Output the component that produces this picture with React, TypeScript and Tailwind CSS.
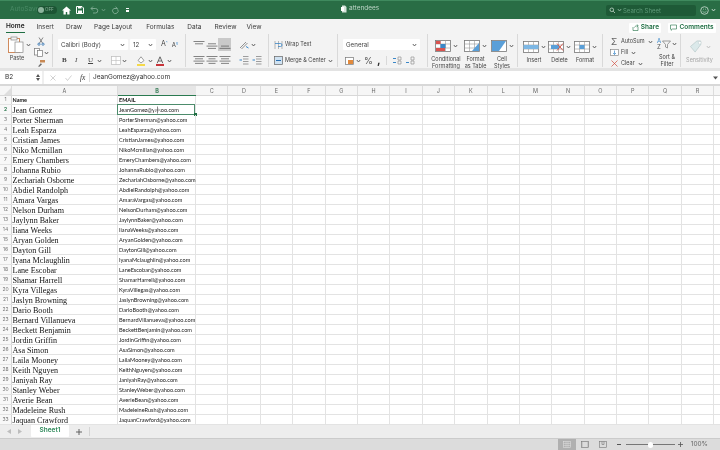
import React from "react";

const names = ["Jean Gomez","Porter Sherman","Leah Esparza","Cristian James","Niko Mcmillan","Emery Chambers","Johanna Rubio","Zechariah Osborne","Abdiel Randolph","Amara Vargas","Nelson Durham","Jaylynn Baker","Iiana Weeks","Aryan Golden","Dayton Gill","Iyana Mclaughlin","Lane Escobar","Shamar Harrell","Kyra Villegas","Jaslyn Browning","Dario Booth","Bernard Villanueva","Beckett Benjamin","Jordin Griffin","Asa Simon","Laila Mooney","Keith Nguyen","Janiyah Ray","Stanley Weber","Averie Bean","Madeleine Rush","Jaquan Crawford"];
const extra = ["C","D","E","F","G","H","I","J","K","L","M","N","O","P","Q","R"];
const sans = "font-['Inter','Liberation_Sans',sans-serif]";
const lato = "font-['Lato','Liberation_Sans',sans-serif]";

function Chev({ c = "#555" }: { c?: string }) {
  return <svg width="5" height="4" viewBox="0 0 5 4" className="shrink-0"><path d="M.8 1 2.5 3 4.2 1" fill="none" stroke={c} strokeWidth=".9" /></svg>;
}
function Sep() {
  return <div className="w-px h-[33px] bg-[#d9d9d9] shrink-0" />;
}
function Lines({ w }: { w: number[] }) {
  return (
    <svg width="12" height="10" viewBox="0 0 12 10">
      {w.map((x, i) => <path key={i} d={`M${(12 - x) / 2} ${1.5 + i * 2.3}h${x}`} stroke="#666" strokeWidth=".8" />)}
    </svg>
  );
}
function GridIcon({ children }: { children?: React.ReactNode }) {
  return (
    <svg width="16" height="12" viewBox="0 0 16 12">
      <rect x=".5" y=".5" width="15" height="11" fill="#fff" stroke="#777" strokeWidth=".8" />
      <path d="M5.5 .5v11M10.5 .5v11M.5 4h15M.5 8h15" stroke="#999" strokeWidth=".6" />
      {children}
    </svg>
  );
}
function Big({ w, label, icon, gray }: { w: number; label: React.ReactNode; icon: React.ReactNode; gray?: boolean }) {
  return (
    <div className="flex flex-col items-center shrink-0 h-full pt-[7px]" style={{ width: w }}>
      <div className="h-[13px] flex items-center gap-[2px]">{icon}<Chev c={gray ? "#bbb" : "#555"} /></div>
      <div className={`mt-[3.500px] text-center text-[5.5px] leading-[7px] whitespace-nowrap ${gray ? "text-[#a5a5a5]" : "text-[#444]"}`}>{label}</div>
    </div>
  );
}

function TitleBar() {
  return (
    <div className="h-[19px] bg-[#296d45] border-t border-[#3f8a5e] flex items-center text-white relative shrink-0">
      <span className={`ml-[10px] w-[26px] text-[6.5px] text-[#4a8a66] ${sans}`}>AutoSave</span>
      <div className="ml-px w-[20px] h-[8px] rounded-full bg-[#1c5534] flex items-center pl-[1px]">
        <div className="w-[6px] h-[6px] rounded-full bg-[#8db59e]" />
        <span className="ml-[1px] text-[4.5px] text-[#8db59e]">OFF</span>
      </div>
      <svg className="ml-[5px]" width="9" height="9" viewBox="0 0 9 9"><path d="M4.500.5 0 4.500h1.500V8.500h2.300V6h1.400v2.500h2.300v-4H9z" fill="#fff" /></svg>
      <svg className="ml-[5px]" width="8" height="8" viewBox="0 0 8 8"><path d="M.5.500h5.500L7.500 2v5.500H.5z" fill="none" stroke="#fff" /><path d="M2 .5h3.500v2H2zM2 4.500h4v3H2z" fill="#fff" /></svg>
      <svg className="ml-[6px]" width="9" height="8" viewBox="0 0 9 8"><path d="M3 .5 1 2.500l2 2M1 2.500h4.500a2.200 2.200 0 0 1 0 4.500H3" fill="none" stroke="#82ae95" strokeWidth=".9" /></svg>
      <div className="ml-[2px]"><Chev c="#6fa085" /></div>
      <svg className="ml-[5px]" width="8" height="9" viewBox="0 0 8 9"><path d="M4.500.800 6.500 2.500H2.800a2.800 2.800 0 1 0 3.900.8" fill="none" stroke="#82ae95" strokeWidth=".9" /></svg>
      <div className="ml-[7px] flex flex-col items-center gap-[1px]"><div className="w-[3px] h-[1px] bg-white" /><div className="w-[3px] h-[2px] bg-white" /></div>
      <div className="absolute left-[341px] top-[3px] flex items-center gap-[2px]">
        <svg width="6" height="8" viewBox="0 0 6 8"><path d="M1 .5h3L5.500 2v5.500H1z" fill="#d5e4db" /><path d="M0 2h3v4H0z" fill="#fff" /></svg>
        <span className={`text-[6.5px] text-[#bcd4c6] ${sans}`}>attendees</span>
      </div>
      <div className="ml-auto w-[90px] h-[11px] rounded-[2px] bg-[#1e5a37] flex items-center pl-[3px] gap-[1px]">
        <svg width="7" height="7" viewBox="0 0 7 7"><circle cx="2.800" cy="2.800" r="1.800" fill="none" stroke="#c4d8cc" strokeWidth=".8" /><path d="M4.200 4.200 6 6" stroke="#c4d8cc" strokeWidth=".8" /></svg>
        <Chev c="#8db59e" />
        <span className={`text-[6px] text-[#5f9a79] ${sans}`}>Search Sheet</span>
      </div>
      <svg className="ml-[4px]" width="9" height="9" viewBox="0 0 9 9"><circle cx="4.500" cy="4.500" r="3.800" fill="none" stroke="#cfe0d6" strokeWidth=".8" /><path d="M2.500 5.200c1 1.400 3 1.400 4 0" fill="none" stroke="#cfe0d6" strokeWidth=".6" /><path d="M3 3.200h.7M5.300 3.200H6" stroke="#cfe0d6" strokeWidth=".8" /></svg>
      <div className="ml-[2px] mr-[4px]"><Chev c="#cfe0d6" /></div>
    </div>
  );
}

function Tabs() {
  const items: [string, string][] = [["Insert","ml-[12px]"],["Draw","ml-[12px]"],["Page Layout","ml-[12px]"],["Formulas","ml-[14px]"],["Data","ml-[13px]"],["Review","ml-[13px]"],["View","ml-[10px]"]];
  return (
    <div className={`h-[14px] bg-[#f3f3f3] flex items-center pl-[6px] text-[6.5px] text-[#3a3a3a] shrink-0 ${sans}`}>
      <div className="h-full flex items-center pt-[3px] border-b-[1px] border-[#1f6e43] font-semibold text-[#1d1d1d]">Home</div>
      {items.map(([t, c]) => <span key={t} className={`${c} pt-[3px]`}>{t}</span>)}
      <div className="ml-auto flex items-center gap-[7px] mr-[4px] pt-[3px]">
        <div className="h-[10px] w-[32px] bg-white rounded-[1px] flex items-center justify-end pr-[2px] gap-[2px] text-[#1f6e43] font-semibold">
          <svg width="7" height="7" viewBox="0 0 7 7"><path d="M1 3v3.500h5V3M2.500 3.500C3 2 4 1.800 6 1.800M4.800 .5 6.300 1.800 4.800 3.100" fill="none" stroke="#1f6e43" strokeWidth=".6" /></svg>
          Share
        </div>
        <div className="h-[10px] w-[48px] bg-white rounded-[1px] flex items-center justify-center gap-[2px] text-[#1f6e43] font-semibold">
          <svg width="7" height="7" viewBox="0 0 7 7"><path d="M.5 1h6v4H2.500L1.200 6.300V5H.5z" fill="none" stroke="#1f6e43" strokeWidth=".6" /></svg>
          Comments
        </div>
      </div>
    </div>
  );
}

function Ribbon() {
  return (
    <div className={`h-[38px] bg-[#f3f3f3] border-b-[3px] border-[#e3e3e3] flex items-start text-[#444] shrink-0 ${sans}`}>
      {/* Clipboard */}
      <div className="w-[52px] h-full flex shrink-0 pl-[7px]">
        <div className="w-[24px] flex flex-col items-center pt-[3px]">
          <div className="flex items-center gap-[1px]">
            <svg width="17" height="17" viewBox="0 0 17 17"><rect x=".5" y="2.500" width="11" height="14" fill="#fff" stroke="#d08a5c" /><rect x="3" y="1" width="6" height="3" fill="#f3f3f3" stroke="#888" strokeWidth=".7" /><rect x="7" y="6" width="8" height="10.500" fill="#fff" stroke="#888" strokeWidth=".7" /></svg>
            <Chev />
          </div>
          <span className="mt-[2px] text-[5.5px] leading-[7px] mr-[4px]">Paste</span>
        </div>
        <div className="ml-[2px] flex flex-col items-center pt-[4px] gap-[2px] w-[16px]">
          <svg width="8" height="9" viewBox="0 0 8 9"><path d="M2 .5 5.500 6M6 .5 2.500 6" stroke="#6a6a6a" strokeWidth=".8" /><circle cx="2" cy="7.200" r="1.100" fill="none" stroke="#2b6fb0" strokeWidth=".8" /><circle cx="6" cy="7.200" r="1.100" fill="none" stroke="#2b6fb0" strokeWidth=".8" /></svg>
          <div className="flex items-center gap-[1px]">
            <svg width="9" height="9" viewBox="0 0 9 9"><rect x=".5" y=".5" width="5" height="6.500" fill="#fff" stroke="#777" strokeWidth=".7" /><rect x="3.500" y="2.500" width="5" height="6" fill="#fff" stroke="#777" strokeWidth=".7" /></svg>
            <Chev />
          </div>
          <svg width="9" height="8" viewBox="0 0 9 8"><path d="M3 1h5v2.500H3z" fill="#c98a55" /><path d="M1 7.500 3.800 4.200 5 5.200 2.500 7.800z" fill="#6a6a6a" /></svg>
        </div>
      </div>
      <div className="mt-[1px]"><Sep /></div>

      {/* Font */}
      <div className="w-[132px] h-full shrink-0 pl-[5px] pt-[6px] flex flex-col">
        <div className="flex items-center h-[11px]">
          <div className="w-[70px] h-[11px] bg-white rounded-[1px] flex items-center justify-between px-[3px] text-[6.2px]">Calibri (Body)<Chev /></div>
          <div className="ml-[2px] w-[26px] h-[11px] bg-white rounded-[1px] flex items-center justify-between px-[3px] text-[6.2px]">12<Chev /></div>
          <span className="ml-[5px] text-[7px]">A<sup className="text-[#3a87c8] text-[4px]">^</sup></span>
          <span className="ml-[4px] text-[6px]">A<sup className="text-[#3a87c8] text-[4px]">v</sup></span>
        </div>
        <div className="mt-[5px] flex items-center h-[11px] text-[7px] text-[#444]">
          <span className="ml-[4px] w-[13px] font-bold font-['Liberation_Serif',serif]">B</span>
          <span className="w-[13px] italic font-['Liberation_Serif',serif]">I</span>
          <span className="w-[9px] underline font-['Liberation_Serif',serif]">U</span>
          <Chev />
          <svg className="ml-[9px]" width="10" height="9" viewBox="0 0 10 9"><rect x=".5" y=".5" width="9" height="8" fill="#fff" stroke="#bbb" strokeWidth=".7" /><path d="M5 .5v8M.5 4.500h9" stroke="#bbb" strokeWidth=".6" /></svg>
          <div className="ml-[1px]"><Chev /></div>
          <svg className="ml-[9px]" width="10" height="10" viewBox="0 0 10 10"><path d="M5 .8 8 4.500 5 7 2 4.500z" fill="#fff" stroke="#777" strokeWidth=".7" /><rect x="1" y="8" width="8" height="2" fill="#f5d94a" /></svg>
          <div className="ml-[2px]"><Chev /></div>
          <svg className="ml-[2px]" width="10" height="10" viewBox="0 0 10 10"><path d="M2.200 7.200 5 .8l2.800 6.400M3.300 5h3.400" fill="none" stroke="#444" strokeWidth=".8" /><rect x="1" y="8" width="8" height="2" fill="#c8343a" /></svg>
          <div className="ml-[2px]"><Chev /></div>
        </div>
      </div>
      <div className="mt-[1px]"><Sep /></div>

      {/* Alignment */}
      <div className="w-[82px] h-full shrink-0 pt-[5px] pl-[6px] flex flex-col">
        <div className="flex items-center h-[13px]">
          <div className="w-[13px] flex justify-center"><Lines w={[11,8,0]} /></div>
          <div className="w-[13px] flex justify-center"><Lines w={[0,8,11,8]} /></div>
          <div className="w-[13px] h-[13px] bg-[#c9c9c9] flex items-center justify-center"><Lines w={[0,0,8,11]} /></div>
          <svg className="ml-[8px]" width="10" height="10" viewBox="0 0 10 10"><path d="M1 8 7 2M2.500 9 8.500 3" stroke="#777" strokeWidth=".8" /><path d="M7 6.500 9.500 8" stroke="#3a87c8" /></svg>
          <div className="ml-[2px]"><Chev /></div>
        </div>
        <div className="mt-[3px] flex items-center h-[11px]">
          <div className="w-[13px] flex justify-center"><Lines w={[11,8,11,8]} /></div>
          <div className="w-[13px] flex justify-center"><Lines w={[11,7,11,7]} /></div>
          <div className="w-[13px] flex justify-center"><Lines w={[11,8,11,8]} /></div>
          <div className="ml-[8px] flex gap-[3px]">
            <svg width="10" height="10" viewBox="0 0 10 10"><path d="M4 1.500h5.500M4 4h5.500M4 6.500h5.500M4 9h5.500" stroke="#777" strokeWidth=".7" /><path d="M.5 5h2.500" stroke="#3a87c8" /></svg>
            <svg width="10" height="10" viewBox="0 0 10 10"><path d="M4 1.500h5.500M4 4h5.500M4 6.500h5.500M4 9h5.500" stroke="#777" strokeWidth=".7" /><path d="M3 5H.5" stroke="#3a87c8" /></svg>
          </div>
        </div>
      </div>
      <div className="mt-[1px]"><Sep /></div>

      {/* Wrap */}
      <div className="w-[68px] h-full shrink-0 pl-[5px] pt-[6px] text-[5.5px] flex flex-col">
        <div className="flex items-center h-[11px] gap-[2px]">
          <svg width="9" height="10" viewBox="0 0 9 10"><path d="M1 1v8M4.500 1v8M8 1v8" stroke="#999" strokeWidth=".7" /><path d="M1 3.500h5.500a1.500 1.500 0 0 1 0 3H4" fill="none" stroke="#3a87c8" strokeWidth=".8" /></svg>
          Wrap Text
        </div>
        <div className="mt-[5px] flex items-center h-[11px] gap-[2px]">
          <svg width="9" height="9" viewBox="0 0 9 9"><rect x=".5" y=".5" width="8" height="8" fill="#cfe2f2" stroke="#666" strokeWidth=".7" /><path d="M2 4.500h5" stroke="#2b6fb0" /></svg>
          <span className="whitespace-nowrap">Merge &amp; Center</span>
          <Chev />
        </div>
      </div>
      <div className="mt-[1px]"><Sep /></div>

      {/* Number */}
      <div className="w-[89px] h-full shrink-0 pl-[5px] pt-[6px] flex flex-col">
        <div className="w-[77px] h-[11px] bg-white rounded-[1px] flex items-center justify-between px-[3px] text-[6.2px]">General<Chev /></div>
        <div className="mt-[5px] h-[11px] flex items-center text-[#555]">
          <svg className="ml-[2px]" width="9" height="8" viewBox="0 0 9 8"><rect x=".5" y=".5" width="8" height="7" fill="#fff" stroke="#777" strokeWidth=".7" /><rect x="3" y="3" width="5" height="4" fill="#e28a3c" /></svg>
          <div className="ml-[2px]"><Chev /></div>
          <span className="ml-[3px] text-[9px] leading-[9px] w-[13px]">%</span>
          <span className="text-[11px] font-bold leading-[9px] w-[9px] text-[#333]">,</span>
          <div className="w-px h-[9px] bg-[#d9d9d9] mr-[5px]" />
          <svg width="10" height="9" viewBox="0 0 10 9"><path d="M1 2.500h3M1 6.500h3" stroke="#3a87c8" /><path d="M6 1h3v3H6zM6 5h3v3H6z" fill="none" stroke="#888" strokeWidth=".6" /></svg>
          <svg className="ml-[3px]" width="10" height="9" viewBox="0 0 10 9"><path d="M1 6.500h3" stroke="#3a87c8" /><path d="M6 1h3v3H6zM6 5h3v3H6z" fill="none" stroke="#888" strokeWidth=".6" /></svg>
        </div>
      </div>
      <div className="mt-[1px]"><Sep /></div>

      {/* Styles */}
      <div className="w-[89px] h-full shrink-0 flex pl-[2px]">
        <Big w={32} label={<>Conditional<br />Formatting</>} icon={<GridIcon><rect x="1" y="1" width="4.500" height="3" fill="#d9534f" /><rect x="5.500" y="4" width="5" height="4" fill="#3a87c8" /><rect x="1" y="8" width="9" height="3" fill="#d9534f" /></GridIcon>} />
        <Big w={27} label={<>Format<br />as Table</>} icon={<GridIcon><path d="M8 11 15 3v8z" fill="#5a9fd8" /></GridIcon>} />
        <Big w={26} label={<>Cell<br />Styles</>} icon={<svg width="16" height="12" viewBox="0 0 16 12"><rect x=".5" y=".5" width="15" height="11" fill="#fff" stroke="#777" strokeWidth=".8" /><path d="M1 1h14L8 11H1z" fill="#5a9fd8" /></svg>} />
      </div>
      <div className="mt-[1px]"><Sep /></div>

      {/* Cells */}
      <div className="w-[84px] h-full shrink-0 flex pl-[3px]">
        <Big w={26} label="Insert" icon={<GridIcon><rect x=".5" y="4" width="15" height="4" fill="#7db7e4" /></GridIcon>} />
        <Big w={25} label="Delete" icon={<GridIcon><rect x="3" y="4" width="8" height="4" fill="#5a9fd8" /><path d="M9 2.500 15 9.500M15 2.500 9 9.500" stroke="#d04a3c" strokeWidth=".9" /></GridIcon>} />
        <Big w={26} label="Format" icon={<GridIcon><rect x="5.500" y="4" width="5" height="4" fill="#5a9fd8" /></GridIcon>} />
      </div>
      <div className="mt-[1px]"><Sep /></div>

      {/* Editing */}
      <div className="w-[77px] h-full shrink-0 flex text-[5.5px] pl-[5px]">
        <div className="w-[46px] pt-[4px] flex flex-col gap-[2px]">
          <div className="h-[9px] flex items-center gap-[1px]"><span className="w-[12px] text-[9px] leading-[9px] text-[#666] text-center">Σ</span>AutoSum<span className="ml-[2px]"><Chev /></span></div>
          <div className="h-[9px] flex items-center gap-[1px]"><span className="w-[12px] flex justify-center"><svg width="9" height="7" viewBox="0 0 9 7"><rect x=".5" y=".5" width="8" height="6" fill="#fff" stroke="#777" strokeWidth=".6" /><path d="M4.500 1.500v4M3 4l1.500 1.500L6 4" fill="none" stroke="#3a87c8" strokeWidth=".7" /></svg></span>Fill<span className="ml-[2px]"><Chev /></span></div>
          <div className="h-[9px] flex items-center gap-[1px]"><span className="w-[12px] flex justify-center"><svg width="7" height="7" viewBox="0 0 7 7"><path d="M.5.500l6 6M6.500.500l-6 6" stroke="#d04a3c" strokeWidth=".7" /></svg></span>Clear<span className="ml-[2px]"><Chev /></span></div>
        </div>
        <div className="w-[26px] pt-[5px] flex flex-col items-center">
          <div className="flex items-center gap-[1px]">
            <span className="flex flex-col text-[6px] leading-[6px]"><span className="text-[#3a87c8]">A</span><span className="text-[#555]">Z</span></span>
            <svg width="9" height="9" viewBox="0 0 9 9"><path d="M.5 1h8L5.500 4.500V8l-2-1V4.500z" fill="none" stroke="#777" strokeWidth=".7" /></svg>
            <Chev />
          </div>
          <div className="mt-[4px] text-center leading-[7px]">Sort &amp;<br />Filter</div>
        </div>
      </div>
      <div className="mt-[1px]"><Sep /></div>

      {/* Sensitivity */}
      <div className="flex-1 h-full flex justify-center pr-[2px]">
        <Big w={36} gray label="Sensitivity" icon={<svg width="15" height="13" viewBox="0 0 15 14"><path d="M1 7 8 1h4v4l-6 8z" fill="#dbe9ea" stroke="#b5c6c8" strokeWidth=".7" /><circle cx="11" cy="3" r="1.500" fill="#fff" stroke="#b5c6c8" strokeWidth=".5" /></svg>} />
      </div>
    </div>
  );
}

function FormulaBar() {
  return (
    <div className={`h-[15px] bg-white border-b-[2px] border-[#d8d8d8] flex items-center text-[6.5px] text-[#333] shrink-0 relative ${sans}`}>
      <div className="w-[44px] h-full bg-white flex items-center justify-between pl-[5px] pr-[2px] border-r-[2px] border-[#efefef]">
        B2
        <div className="flex flex-col gap-[1px]">
          <svg width="4" height="3" viewBox="0 0 4 3"><path d="M2 0 4 3H0z" fill="#555" /></svg>
          <svg width="4" height="3" viewBox="0 0 4 3"><path d="M2 3 4 0H0z" fill="#555" /></svg>
        </div>
      </div>
      <svg className="ml-[6px]" width="6" height="6" viewBox="0 0 6 6"><path d="M.5.500l5 5M5.500.500l-5 5" stroke="#bdbdbd" strokeWidth=".7" /></svg>
      <svg className="ml-[9px]" width="7" height="6" viewBox="0 0 7 6"><path d="M.5 3 2.500 5.500 6.500.5" fill="none" stroke="#bdbdbd" strokeWidth=".7" /></svg>
      <span className="ml-[8px] w-[9px] italic text-[7.5px] font-['Liberation_Serif',serif]">fx</span>
      <div className="w-px h-[9px] bg-[#ddd] mr-[3px]" />
      <span>JeanGomez@yahoo.com</span>
      <svg className="ml-auto mr-[2px]" width="5" height="4" viewBox="0 0 5 4"><path d="M0 .5h5L2.500 3.500z" fill="#555" /></svg>
    </div>
  );
}

function Sheet() {
  const hdr = "h-full flex items-center justify-center pt-[1px] border-r border-[#dcdcdc] text-[5.5px] text-[#666] shrink-0";
  const cellX = "h-full border-r border-[#e3e3e3] shrink-0 w-[32.4px]";
  return (
    <div className="flex-1 bg-white flex flex-col min-h-0 overflow-hidden">
      <div className={`h-[10px] flex bg-[#f6f6f6] border-b border-[#d8d8d8] shrink-0 ${sans}`}>
        <div className={`${hdr} w-[12px] justify-end items-end`}><svg width="7" height="7" viewBox="0 0 7 7"><path d="M7 0v7H0z" fill="#dedede" /></svg></div>
        <div className={`${hdr} w-[106px]`}>A</div>
        <div className="h-[10px] flex items-center justify-center pt-[1px] text-[5.5px] font-semibold text-[#1f6e43] bg-[#e6e6e6] border-b border-[#2a7a50] w-[78px] shrink-0">B</div>
        {extra.map((c) => <div key={c} className={`${hdr} w-[32.4px]`}>{c}</div>)}
      </div>
      {[null, ...names].map((n, i) => {
        const email = n ? n.replace(" ", "") + "@yahoo.com" : "EMAIL";
        return (
          <div key={i} className={`${i === 0 ? "h-[8.700px]" : "h-[10px]"} flex border-b border-[#e3e3e3] shrink-0`}>
            <div className={`w-[12px] h-full bg-[#f8f8f8] border-r border-[#d4d4d4] flex items-center justify-center text-[5px] shrink-0 ${i === 0 ? "" : "pt-[2px]"} ${i === 1 ? "text-[#1f6e43] font-semibold" : "text-[#777]"} ${sans}`}>{i + 1}</div>
            <div className={`w-[106px] h-full border-r border-[#e3e3e3] pl-[0.5px] whitespace-nowrap flex items-center shrink-0 ${n ? "pt-[4px] text-[8.1px] text-[#111] font-['Liberation_Serif',serif]" : `text-[5.5px] font-bold text-[#111] ${lato}`}`}>{n ?? "Name"}</div>
            <div className={`w-[78px] h-full border-r border-[#e3e3e3] pl-[1px] whitespace-nowrap flex items-center shrink-0 relative ${n ? "pt-[1px] text-[5.6px] text-[#222]" : "text-[5.5px] font-bold text-[#111]"} ${lato}`}>
              {email}
              {i === 1 && (
                <>
                  <div className="absolute -left-px -top-px w-[78px] h-[11px] border-[1.5px] border-[#4d8c6c]" />
                  <div className="absolute right-[-2px] bottom-[-2px] w-[3px] h-[3px] bg-[#1f6e43]" />
                  <svg className="absolute left-[36px] top-[1px]" width="7" height="8" viewBox="0 0 7 8"><path d="M3.500 0v8M0 4h7" stroke="#fff" strokeWidth="2.400" /><path d="M3.500 .5v7M.5 4h6" stroke="#555" strokeWidth=".7" /></svg>
                </>
              )}
            </div>
            {extra.map((c) => <div key={c} className={cellX} />)}
          </div>
        );
      })}
    </div>
  );
}

function Footer() {
  return (
    <>
      <div className={`h-[13px] bg-[#ededed] flex items-start shrink-0 ${sans}`}>
        <svg className="ml-[7px] mt-[4px]" width="4" height="5" viewBox="0 0 4 5"><path d="M4 0v5L0 2.500z" fill="#bdbdbd" /></svg>
        <svg className="ml-[7px] mt-[4px]" width="4" height="5" viewBox="0 0 4 5"><path d="M0 0v5l4-2.500z" fill="#bdbdbd" /></svg>
        <div className="ml-[9px] w-[38px] h-[12px] bg-white rounded-b-[1px] flex items-center justify-center text-[6.5px] font-semibold text-[#2f8a5b]">Sheet1</div>
        <svg className="ml-[7px] mt-[4px]" width="6" height="6" viewBox="0 0 6 6"><path d="M3 0v6M0 3h6" stroke="#555" strokeWidth=".9" /></svg>
        <div className="ml-[7px] mt-[2px] w-px h-[9px] bg-[#d4d4d4]" />
      </div>
      <div className={`h-[12px] bg-[#dcdcdc] border-t border-[#cbcbcb] flex items-center justify-end shrink-0 ${sans}`}>
        <div className="w-[18px] h-full bg-[#b0b0b0] flex items-center justify-center">
          <svg width="8" height="7" viewBox="0 0 8 7"><rect x=".5" y=".5" width="7" height="6" fill="none" stroke="#dedede" strokeWidth=".6" /><path d="M3 .5v6M5 .5v6M.5 2.500h7M.5 4.500h7" stroke="#dedede" strokeWidth=".5" /></svg>
        </div>
        <svg className="ml-[5px]" width="8" height="7" viewBox="0 0 8 7"><rect x=".5" y=".5" width="7" height="6" fill="#c8c8c8" stroke="#777" strokeWidth=".6" /><rect x="2" y="1" width="4" height="5" fill="#dcdcdc" /></svg>
        <svg className="ml-[10px]" width="8" height="7" viewBox="0 0 8 7"><rect x=".5" y=".5" width="7" height="6" fill="none" stroke="#777" strokeWidth=".6" /><path d="M3 .5v3h2v-3" fill="none" stroke="#777" strokeWidth=".6" /></svg>
        <div className="ml-[10px] w-[4px] h-px bg-[#555]" />
        <div className="ml-[5px] w-[49px] h-[1px] bg-[#777] relative">
          <div className="absolute left-[22px] top-[-2.5px] w-[5px] h-[6px] rounded-full bg-white" />
        </div>
        <svg className="ml-[3px]" width="5" height="5" viewBox="0 0 5 5"><path d="M2.500 0v5M0 2.500h5" stroke="#555" strokeWidth=".8" /></svg>
        <span className="ml-[8px] mr-[12px] text-[6.5px] text-[#666]">100%</span>
      </div>
    </>
  );
}

export default function App() {
  return (
    <div className={`w-[720px] h-[450px] overflow-hidden flex flex-col bg-white blur-[0.3px] ${sans}`}>
      <TitleBar />
      <Tabs />
      <Ribbon />
      <FormulaBar />
      <Sheet />
      <Footer />
    </div>
  );
}
